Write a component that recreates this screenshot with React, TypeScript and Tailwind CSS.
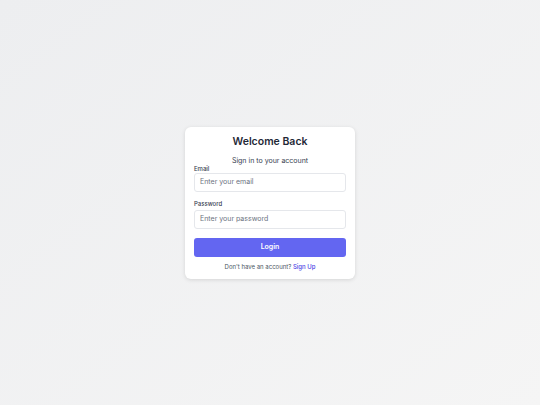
import React from "react";

export default function App() {
  return (
    <div
      className="w-full h-[405px] flex items-center justify-center bg-gradient-to-br from-[#edeef0] to-[#f5f5f5]"
      style={{ fontFamily: "Inter, 'Noto Sans', sans-serif" }}
    >
      <div className="w-[170px] bg-white rounded-[6px] shadow-[0_1px_4px_rgba(0,0,0,0.12)] px-[9px] pt-[7px] pb-[8px] flex flex-col">
        <h1 className="text-[10.5px] leading-[15px] font-semibold text-[#1f2937] text-center">Welcome Back</h1>
        <p className="mt-[8px] text-[7px] leading-[8px] text-[#374151] text-center">Sign in to your account</p>
        <label className="text-[6px] leading-[7px] text-[#374151] font-medium">Email</label>
        <div className="mt-[1px] h-[19px] border border-[#e5e7eb] rounded-[3px] flex items-center px-[5px] text-[7px] text-[#6b7280]">
          Enter your email
        </div>
        <label className="mt-[8px] text-[6px] leading-[8px] text-[#374151] font-medium">Password</label>
        <div className="mt-[2px] h-[19px] border border-[#e5e7eb] rounded-[3px] flex items-center px-[5px] text-[7px] text-[#6b7280]">
          Enter your password
        </div>
        <button className="mt-[9px] h-[19px] rounded-[3px] bg-[#6366f1] text-white text-[7px] font-semibold">Login</button>
        <p className="mt-[5px] text-[6px] leading-[9px] text-[#4b5563] text-center">
          Don't have an account? <span className="text-[#4f46e5] font-medium">Sign Up</span>
        </p>
      </div>
    </div>
  );
}
